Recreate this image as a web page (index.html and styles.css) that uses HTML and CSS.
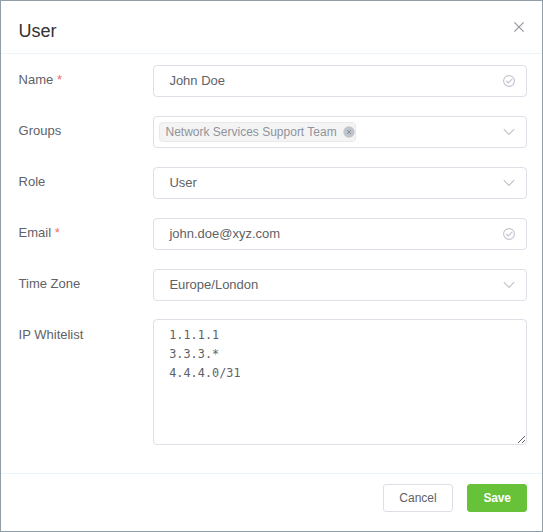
FILE: index.html
```html
<!DOCTYPE html>
<html lang="en">
<head>
<meta charset="utf-8">
<title>User</title>
<link rel="stylesheet" href="styles.css">
</head>
<body>
<svg class="defs" width="0" height="0">
  <symbol id="check" viewBox="0 0 12 12"><circle cx="6" cy="6" r="5.4"/><path d="M3.2 5.9 5.3 7.9 9.3 3.9"/></symbol>
  <symbol id="chevron" viewBox="0 0 12 8"><path d="M.8 1.2 6 6.4 11.2 1.2"/></symbol>
</svg>
<main class="dialog">
  <header class="header">
    <h1 class="title">User</h1>
    <svg class="close" viewBox="0 0 10 10"><path d="M.4.4 9.6 9.6M9.6.4.4 9.6"/></svg>
  </header>
  <form class="form">
    <div class="row"><label class="label">Name <span class="required">*</span></label><div class="field"><span class="value">John Doe</span><svg class="check"><use href="#check"/></svg></div></div>
    <div class="row"><label class="label">Groups</label><div class="field tags"><span class="tag"><span class="tag-text">Network Services Support Team</span><svg class="remove" viewBox="0 0 12 12"><circle cx="6" cy="6" r="5.7"/><path d="m4 4 4 4m0-4L4 8"/></svg></span><svg class="chevron"><use href="#chevron"/></svg></div></div>
    <div class="row"><label class="label">Role</label><div class="field"><span class="value">User</span><svg class="chevron"><use href="#chevron"/></svg></div></div>
    <div class="row"><label class="label">Email <span class="required">*</span></label><div class="field"><span class="value">john.doe@xyz.com</span><svg class="check"><use href="#check"/></svg></div></div>
    <div class="row"><label class="label">Time Zone</label><div class="field"><span class="value">Europe/London</span><svg class="chevron"><use href="#chevron"/></svg></div></div>
    <div class="row row-area"><label class="label">IP Whitelist</label><textarea class="area" spellcheck="false">1.1.1.1
3.3.3.*
4.4.4.0/31</textarea></div>
  </form>
  <footer class="footer">
    <button class="button cancel" type="button">Cancel</button>
    <button class="button save" type="button">Save</button>
  </footer>
</main>
</body>
</html>
```

FILE: styles.css
```css
* { box-sizing: border-box; }
body { margin: 0; font: 13px/30px "Liberation Sans", Arial, sans-serif; color: #606266; }
.defs { position: absolute; }
.dialog { width: 543px; height: 532px; border: 1px solid #909fa7; background: #fff; display: flex; flex-direction: column; }
.header { height: 53px; border-bottom: 1px solid #ecf5fc; padding: 0 18.5px 0 17.6px; display: flex; align-items: center; justify-content: space-between; }
.title { margin: 7px 0 0; font-size: 18px; line-height: 24px; font-weight: 400; color: #303133; }
.close { width: 10px; height: 10px; fill: none; stroke: #909399; stroke-width: 1.1; }
.form { flex: 1; padding: 11px 15px 0 17.6px; display: flex; flex-direction: column; gap: 19px; }
.row { display: flex; align-items: flex-start; }
.row-area { margin-top: -1px; }
.row-area .label { line-height: 31px; }
.label { width: 134.4px; line-height: 29px; }
.required { color: #f56c6c; }
.field { flex: 1; height: 32px; border: 1px solid #dcdfe6; border-radius: 4px; display: flex; align-items: center; justify-content: space-between; padding: 0 11px 0 15.4px; }
.tags { padding-left: 5px; }
.tag { height: 20px; display: flex; align-items: center; gap: 6px; padding: 0 0 0 5.5px; background: #f4f4f5; border: 1px solid #e9e9eb; border-radius: 4px; color: #909399; font-size: 12px; line-height: 18px; }
.remove { width: 12px; height: 12px; fill: #c0c4cc; stroke: none; }
.remove path { stroke: #85888e; stroke-width: .9; }
.check { width: 12px; height: 12px; fill: none; stroke: #c0c4cc; stroke-width: 1.1; }
.chevron { width: 12px; height: 8px; fill: none; stroke: #c0c4cc; stroke-width: 1.2; }
.area { flex: 1; height: 126px; margin: 0; padding: 6px 15.2px; border: 1px solid #dcdfe6; border-radius: 4px; outline: 0; resize: vertical; color: #606266; background: #fff; font: 11.8px/19px "DejaVu Sans Mono", monospace; letter-spacing: .04px; }
.footer { height: 58px; border-top: 1px solid #ecf5fc; padding: 10px 15px; display: flex; justify-content: flex-end; gap: 14px; }
.button { height: 28px; padding: 0; border: 1px solid #dcdfe6; border-radius: 3px; font: 12px/14px "Liberation Sans", Arial, sans-serif; color: #606266; background: #fff; }
.cancel { width: 70px; }
.save { width: 60px; color: #fff; background: #67c23a; border-color: #67c23a; font-weight: 700; letter-spacing: -.2px; }
```
